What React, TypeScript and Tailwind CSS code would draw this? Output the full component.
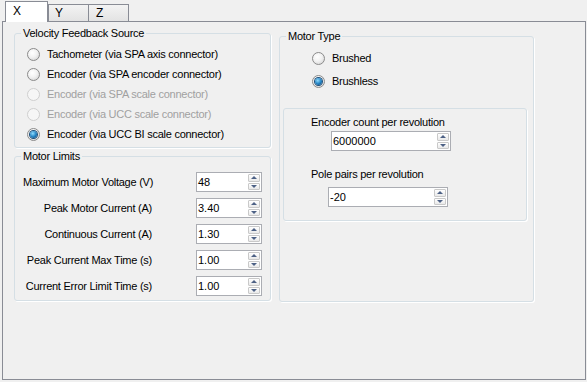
import React from "react";

const font = { fontFamily: '"Liberation Sans", Arial, sans-serif' };

function Radio({
  label,
  checked = false,
  disabled = false,
}: {
  label: string;
  checked?: boolean;
  disabled?: boolean;
}) {
  return (
    <div className="flex h-[20px] items-center gap-[7px]">
      <span
        className={
          disabled
            ? "flex h-[13px] w-[13px] items-center justify-center rounded-full border border-[#cfcfcf] bg-[#f6f6f6]"
            : "flex h-[13px] w-[13px] items-center justify-center rounded-full border border-[#8b8b8b] bg-[radial-gradient(circle_at_40%_35%,#ffffff,#f2f2f2_45%,#cdcdcd)]"
        }
      >
        {checked && (
          <span className="h-[7px] w-[7px] rounded-full bg-[radial-gradient(circle_at_40%_35%,#8fdcff,#1f7fc0_55%,#0a3f70)] shadow-[0_0_0_1px_#1e4f7a]" />
        )}
      </span>
      <span className={disabled ? "text-[#a0a0a0]" : "text-black"}>{label}</span>
    </div>
  );
}

function Spin({ value, width }: { value: string; width: string }) {
  return (
    <div className={`flex h-[20px] border border-[#abadb3] bg-white ${width}`}>
      <span className="flex-1 pl-[1px] text-[11px] leading-[18px] tracking-normal text-black">
        {value}
      </span>
      <div className="flex w-[13px] flex-col gap-[1px] py-[1px] pr-[1px]">
        <div className="flex flex-1 items-center justify-center rounded-[1px] border border-[#c9c9c9] bg-[linear-gradient(#ffffff,#e9e9e9)]">
          <span className="h-0 w-0 border-x-[3px] border-b-[3px] border-x-transparent border-b-[#4d6185]" />
        </div>
        <div className="flex flex-1 items-center justify-center rounded-[1px] border border-[#c9c9c9] bg-[linear-gradient(#ffffff,#e9e9e9)]">
          <span className="h-0 w-0 border-x-[3px] border-t-[3px] border-x-transparent border-t-[#4d6185]" />
        </div>
      </div>
    </div>
  );
}

function LimitRow({ label, value }: { label: string; value: string }) {
  return (
    <div className="flex h-[20px] items-center">
      <span className="ml-[8px] w-[129px] whitespace-nowrap text-right">{label}</span>
      <span className="ml-[44px]">
        <Spin value={value} width="w-[66px]" />
      </span>
    </div>
  );
}

export default function App() {
  return (
    <div
      className="h-[382px] w-[587px] overflow-hidden bg-[#f0f0f0] pt-[1px] text-[11px] leading-[13px] tracking-[-0.25px] text-black"
      style={font}
    >
      {/* Tabs */}
      <div className="flex h-[20px] items-end pl-[5px]">
        <div className="relative z-10 -mb-[1px] h-[21px] w-[43px] border border-b-0 border-[#898c95] bg-white pl-[7px] pt-[3px] text-[12px]">
          X
        </div>
        <div className="h-[17px] w-[41px] border border-b-0 border-[#898c95] bg-[linear-gradient(#f3f3f3,#e3e3e3)] pl-[6px] pt-[2px] text-[12px]">
          Y
        </div>
        <div className="h-[17px] w-[40px] border border-b-0 border-l-0 border-[#898c95] bg-[linear-gradient(#f3f3f3,#e3e3e3)] pl-[7px] pt-[2px] text-[12px]">
          Z
        </div>
      </div>

      {/* Tab page */}
      <div className="ml-[2px] flex h-[359px] w-[584px] gap-[8px] border border-[#898c95] bg-[#f0f0f0] pl-[11px] pt-[5px]">
        {/* Left column */}
        <div className="flex w-[257px] flex-col gap-[2px]">
          <fieldset className="rounded-[3px] border border-[#d5dfe5] pb-[3px] shadow-[1px_1px_0_#ffffff]">
            <legend className="ml-[6px] px-[2px]">Velocity Feedback Source</legend>
            <div className="ml-[12px] mt-[4px] flex flex-col">
              <Radio label="Tachometer (via SPA axis connector)" />
              <Radio label="Encoder (via SPA encoder connector)" />
              <Radio label="Encoder (via SPA scale connector)" disabled />
              <Radio label="Encoder (via UCC scale connector)" disabled />
              <Radio label="Encoder (via UCC BI scale connector)" checked />
            </div>
          </fieldset>

          <fieldset className="rounded-[3px] border border-[#d5dfe5] pb-[4px] shadow-[1px_1px_0_#ffffff]">
            <legend className="ml-[6px] px-[2px]">Motor Limits</legend>
            <div className="mt-[9px] flex flex-col gap-[6px]">
              <LimitRow label="Maximum Motor Voltage (V)" value="48" />
              <LimitRow label="Peak Motor Current (A)" value="3.40" />
              <LimitRow label="Continuous Current (A)" value="1.30" />
              <LimitRow label="Peak Current Max Time (s)" value="1.00" />
              <LimitRow label="Current Error Limit Time (s)" value="1.00" />
            </div>
          </fieldset>
        </div>

        {/* Right column */}
        <div className="mt-[3px] w-[255px]">
          <fieldset className="h-[272px] rounded-[3px] border border-[#d5dfe5] shadow-[1px_1px_0_#ffffff]">
            <legend className="ml-[6px] px-[2px]">Motor Type</legend>
            <div className="ml-[32px] mt-[5px] flex flex-col gap-[3px]">
              <Radio label="Brushed" />
              <Radio label="Brushless" checked />
            </div>
            <div className="ml-[3px] mt-[17px] w-[244px] rounded-[3px] border border-[#d5dfe5] pb-[13px] shadow-[1px_1px_0_#ffffff]">
              <div className="ml-[27px] mt-[7px]">Encoder count per revolution</div>
              <div className="ml-[47px] mt-[2px]">
                <Spin value="6000000" width="w-[120px]" />
              </div>
              <div className="ml-[27px] mt-[17px]">Pole pairs per revolution</div>
              <div className="ml-[44px] mt-[6px]">
                <Spin value="-20" width="w-[120px]" />
              </div>
            </div>
          </fieldset>
        </div>
      </div>
    </div>
  );
}
